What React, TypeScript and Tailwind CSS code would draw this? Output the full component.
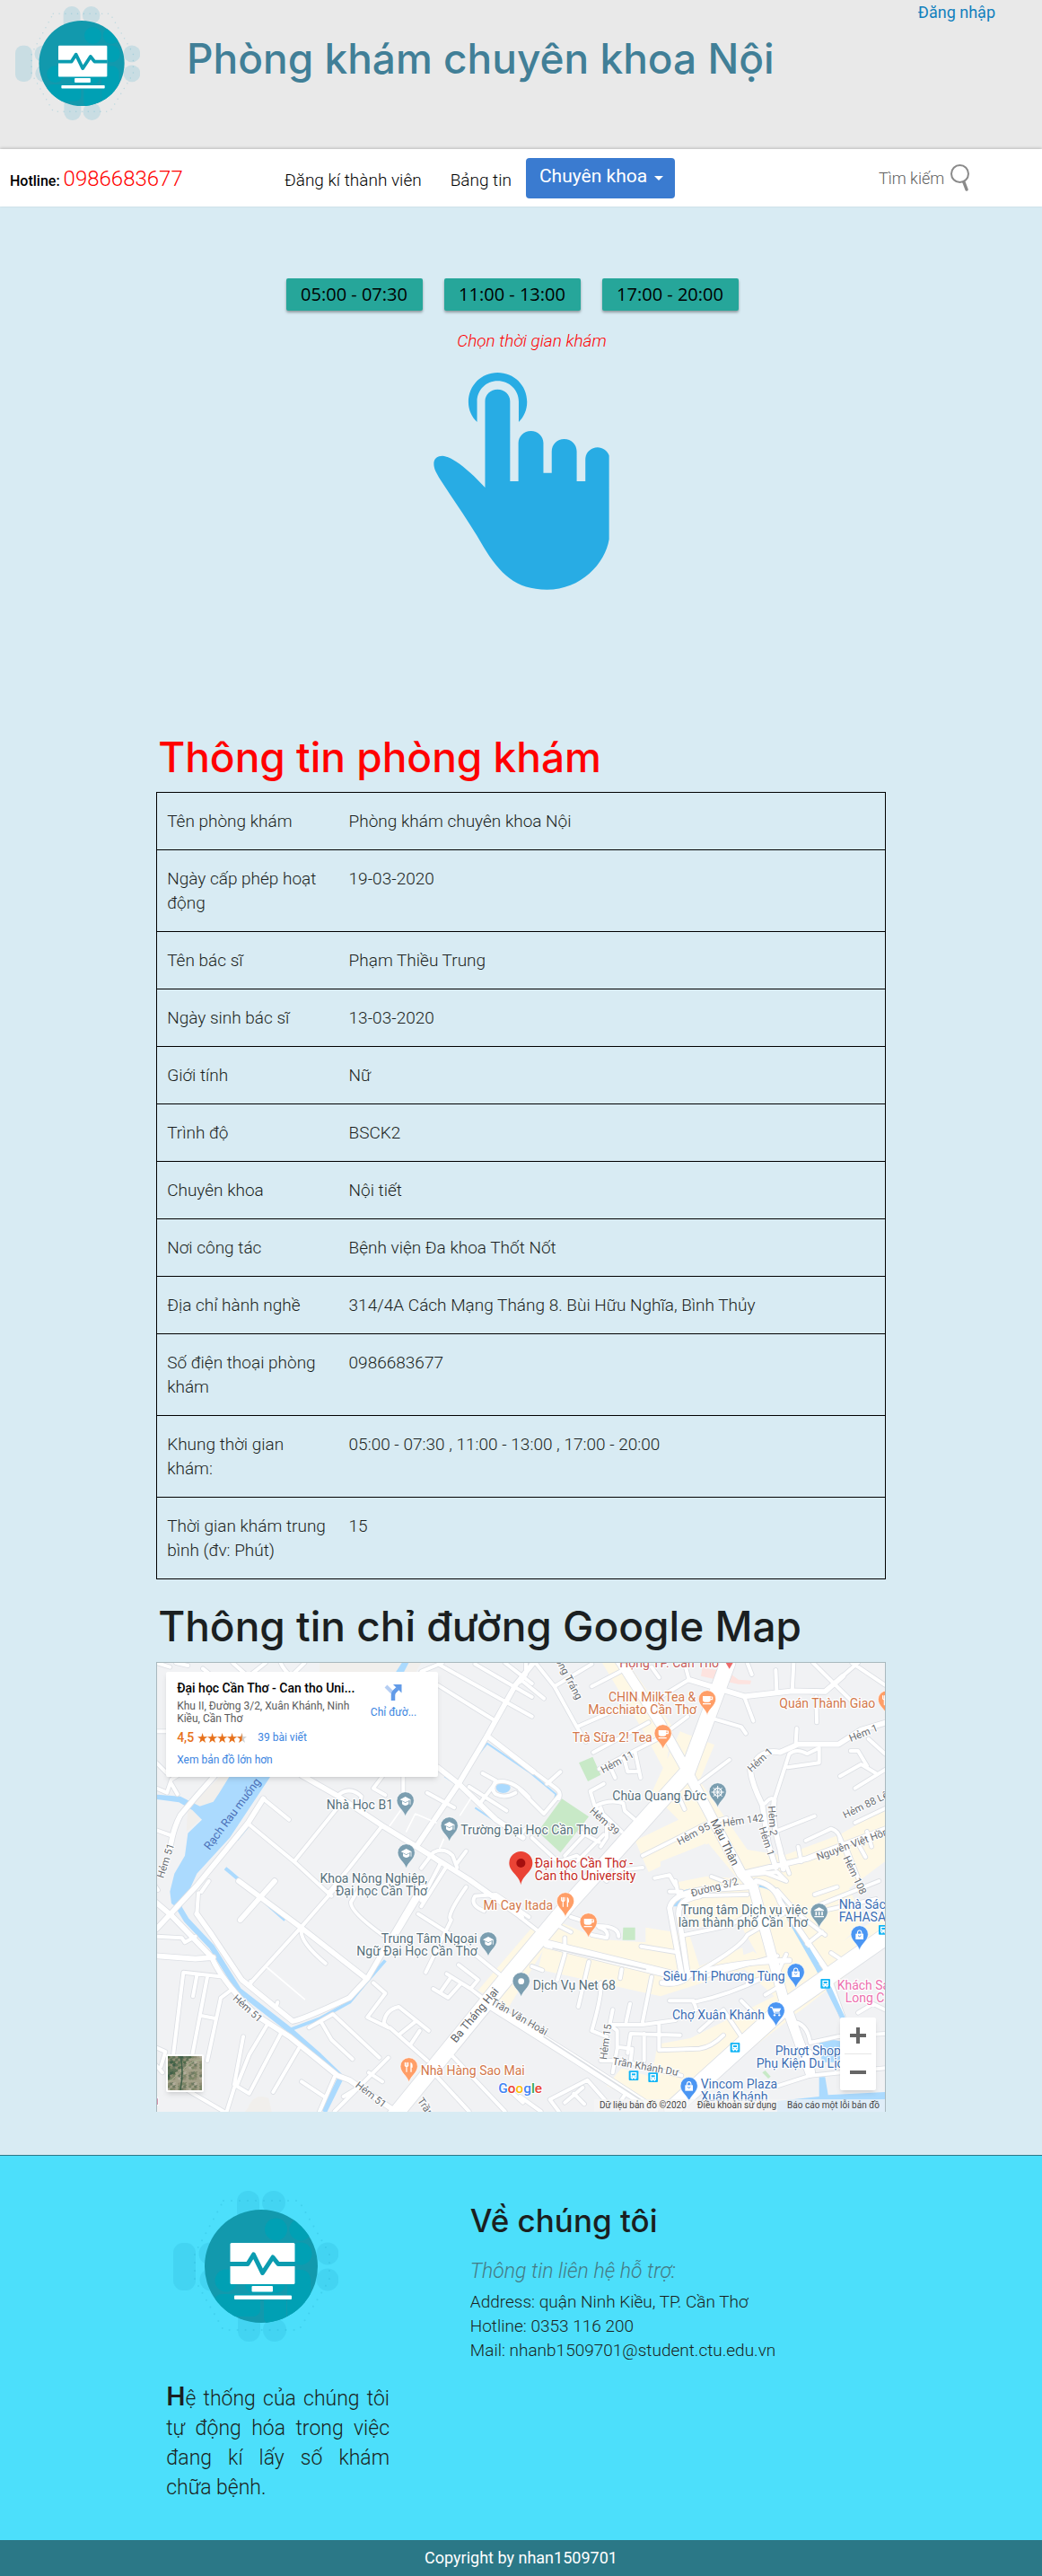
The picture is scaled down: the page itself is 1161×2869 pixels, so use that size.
import React from "react";

const HEADING = "font-['Inter',sans-serif] font-medium";

function Logo({ className }: { className: string }) {
  return (
    <svg viewBox="0 0 184 168" className={className} role="img" aria-label="Logo phòng khám">
      <g fill="#1299c0" fillOpacity="0.15">
        <rect x="71" y="0" width="25" height="36" rx="12" />
        <circle cx="112" cy="13" r="13" />
        <rect x="0" y="58" width="25" height="53" rx="11" />
        <circle cx="41" cy="70" r="12.5" />
        <circle cx="42" cy="99" r="12.5" />
        <circle cx="172" cy="70" r="12.5" />
        <circle cx="172" cy="99" r="12.5" />
        <rect x="72" y="132" width="25" height="36" rx="12" />
        <circle cx="113" cy="155" r="13" />
      </g>
      <path
        d="M56 11 H140 L174 70 V99 L140 155 H56 L24 99 V70 Z"
        fill="none"
        stroke="#1299c0"
        strokeOpacity="0.2"
        strokeWidth="2"
        strokeLinecap="round"
        strokeDasharray="0 9"
      />
      <clipPath id="disc">
        <circle cx="98" cy="84" r="63" />
      </clipPath>
      <circle cx="98" cy="84" r="63" fill="#1299ad" />
      <g fill="#00a0b4" clipPath="url(#disc)">
        <circle cx="114.500" cy="43" r="12.5" />
        <circle cx="142" cy="43" r="12.5" />
        <circle cx="142" cy="70" r="12.5" />
        <rect x="127" y="88" width="26" height="52" rx="10" />
        <circle cx="59" cy="100" r="12.5" />
        <rect x="80" y="88" width="45" height="26" rx="10" />
        <rect x="46" y="115" width="51" height="25" rx="8" />
        <rect x="101" y="115" width="25" height="34" rx="8" />
        <rect x="127" y="116" width="20" height="24" />
      </g>
      <g fill="#fff">
        <rect x="63.500" y="58" width="72" height="46" rx="1.500" />
        <rect x="87.500" y="106" width="23.500" height="6.500" rx="1" />
        <rect x="68" y="116.500" width="64" height="4.500" rx="1" />
      </g>
      <path
        d="M63 81.500 H83 L89.500 71 L99.500 91.500 L111 74 L117 81.500 H136"
        fill="none"
        stroke="#0b9cb0"
        strokeWidth="5"
        strokeLinejoin="round"
      />
    </svg>
  );
}

function TapHand() {
  return (
    <svg viewBox="539 378 549 726" preserveAspectRatio="none" className="h-[242px] w-[196px]" fill="#28ace4" aria-hidden="true">
      <path d="M675 543 C658 526 648 502 648 476 C648 420 689 378 739 378 C790 378 831 420 831 476 C831 502 821 526 805 543 V475 C805 436 776 406 739 406 C703 406 675 436 675 475 Z" />
      <path d="M700 762 V473 C700 451 717 434 739 434 C761 434 778 451 778 473 V741 H804 V613 C804 591 821 573 843 573 C865 573 882 591 882 613 V713 H908 V641 C908 618 925 600 947 600 C969 600 986 618 986 641 V741 H1013 V668 C1013 646 1030 628 1051 628 C1067 628 1081 639 1087 655 V935 C1075 1015 1000 1103 893 1103 C795 1103 746 1050 695 960 C655 885 605 810 560 735 C548 714 540 700 540 682 C540 664 553 656 567 656 C598 658 652 706 700 762 Z" />
    </svg>
  );
}

const rows: [string, string][] = [
  ["Tên phòng khám", "Phòng khám chuyên khoa Nội"],
  ["Ngày cấp phép hoạt động", "19-03-2020"],
  ["Tên bác sĩ", "Phạm Thiều Trung"],
  ["Ngày sinh bác sĩ", "13-03-2020"],
  ["Giới tính", "Nữ"],
  ["Trình độ", "BSCK2"],
  ["Chuyên khoa", "Nội tiết"],
  ["Nơi công tác", "Bệnh viện Đa khoa Thốt Nốt"],
  ["Địa chỉ hành nghề", "314/4A Cách Mạng Tháng 8. Bùi Hữu Nghĩa, Bình Thủy"],
  ["Số điện thoại phòng khám", "0986683677"],
  ["Khung thời gian khám:", "05:00 - 07:30 , 11:00 - 13:00 , 17:00 - 20:00"],
  ["Thời gian khám trung bình (đv: Phút)", "15"],
];

/* Street network, split in four quadrants. */
const quadrants: { move: string; minor: string[]; mid: string[] }[] = [
  {
    move: "translate(0 0)",
    minor: [
      "M15 370 L50 405 M15 455 L50 470 L65 425 L90 410 M65 440 L85 475",
      "M15 265 H50", "M15 595 L62 612",
      "M170 55 L195 75 M270 36 L320 80 M330 75 L380 36 M430 36 Q440 60 465 80 L510 36",
      "M15 36 L60 50 M80 36 L120 45",
      "M372 490 L458 560", "M320 572 L475 700",
      "M620 480 Q660 445 700 482 L692 512", "M770 415 L740 455 L780 478", "M840 410 V475 L850 520",
      "M620 520 L475 700 L600 815",
      "M770 580 L660 720 L590 805",
      "M955 110 L1140 225", "M960 42 L1270 215", "M900 65 L970 36", "M1080 40 L1270 150", "M1180 36 L1270 105",
      "M920 470 L1010 520", "M1060 450 L1185 530", "M1105 405 L1150 430 Q1130 460 1150 475 Q1180 490 1215 470", "M1100 500 L1150 435 Q1200 420 1260 485",
      "M900 722 L940 670 Q975 650 1005 680 L1020 720 M1050 665 L1020 705", "M930 680 L965 705 L900 830 M985 715 L900 850",
    ],
    mid: [
      "M210 412 L150 480 L95 545 Q70 590 60 660",
      "M15 925 L150 780 L320 572 L372 490",
      "M500 412 L620 480 L770 580 L900 660 L1060 760 L1235 885",
      "M955 385 L1025 440 L1150 560 L1240 620",
      "M1275 36 L1215 110 L1120 280 L1025 440 L890 640",
      "M1120 280 L1275 400",
    ],
  },
  {
    move: "translate(1230 0)",
    minor: [
      "M0 90 L80 155 M0 100 L20 75 V36", "M55 40 L115 115 L190 250 L220 300 M115 115 L240 40 M190 250 L270 215 L340 185",
      "M240 115 L335 65", "M245 335 L430 235", "M265 390 L460 290 L560 215", "M440 50 L465 85 M550 36 L565 92 L445 165",
      "M620 215 L740 250 L755 272", "M760 36 L775 75", "M855 60 L858 128 M915 36 L910 130 M990 150 L992 235 M750 150 L780 230",
      "M1020 130 L1130 36 M980 36 L1110 165 M1110 36 L1220 110", "M600 435 L700 360",
      "M300 380 L318 420 M345 345 L360 400 L392 398 M385 335 L403 420",
      "M820 505 Q840 480 850 495 L900 340 Q925 320 960 340 L1000 320 V370 L895 385",
      "M925 255 L922 305", "M1070 415 L1140 375 L1190 405 M1105 330 L1130 330 L1160 380 M1165 290 L1220 340 M1120 455 L1225 390",
      "M865 595 L985 548", "M955 630 L1040 590 Q1070 600 1070 630 M1120 570 L1225 520",
      "M0 460 L80 540 L130 480 M90 440 L135 400 M0 365 L120 455 Q140 470 130 490",
      "M0 610 L20 590 M40 620 L170 740 L130 700 L190 680 L290 765 M150 680 L225 600 M190 700 L280 610 M200 600 L265 635",
      "M280 440 L235 465 L250 515 L340 600 M250 515 Q300 490 345 505 L350 530 L385 560 M270 520 L290 580 V620 L270 650 M530 480 L550 525",
      "M410 680 L620 575 L690 555", "M320 730 L410 720 M450 755 L500 745 L520 780 M640 750 L720 780",
      "M1090 650 L1140 780 M1160 600 L1175 650 M1070 620 L1110 720 M930 650 L940 700 M1130 640 L1155 685",
      "M750 745 L860 735 L890 765 L800 730 M870 660 L900 740",
    ],
    mid: [
      "M565 92 L750 148 L910 130 L1020 132 L1080 80",
      "M1225 235 L1140 260 L1065 308 H930 L870 335 Q800 320 770 395 Q775 440 810 510 L830 640 L855 720",
      "M850 495 Q840 560 870 660 L880 725",
      "M745 740 L960 690 L1225 590",
    ],
  },
  {
    move: "translate(0 765)",
    minor: [
      "M15 185 L100 190 L110 205 L145 185", "M70 590 L105 305 L240 320", "M150 315 L137 385", "M185 320 L135 580 M215 460 L165 450 M185 600 L230 390 L270 360",
      "M305 520 L275 680 L325 710 M275 690 L250 770 M385 480 L325 580 L285 680 M430 510 L325 710", "M490 560 L405 705",
      "M500 670 L575 720 M610 655 L560 770", "M610 770 L690 690 L790 590 M690 690 L640 720 M725 640 L770 670",
      "M155 40 L150 110 M165 36 L190 0 M330 350 V335", "M500 160 Q490 200 580 275", "M330 340 L498 155 L620 15",
      "M415 420 L420 405", "M525 490 L605 445 L760 590 M565 470 L600 530 L670 595",
      "M740 340 L780 375 L720 455 L790 490 L775 475 Q780 430 825 420 L925 500 M795 490 L920 600 M830 510 L880 470 M865 545 L895 500",
      "M915 305 L1000 130 Q980 120 1050 20", "M985 310 L1065 360 L1110 395 M940 360 L990 390 L1030 345 M965 370 L1000 320 M1025 280 L1090 330 L1065 360",
      "M770 180 Q660 100 665 70 L690 30", "M890 110 L1000 180 L1160 310", "M1110 100 Q1060 80 1080 50 L1150 45 L1260 120",
      "M1000 580 L1180 770 M940 640 L1060 770", "M930 660 L875 720", "M1180 685 L1240 740",
      "M0 550 L45 570 L30 620 M120 700 L240 770 M0 600 L35 640", "M20 30 L0 0",
    ],
    mid: [
      "M0 60 L65 115 L200 255 Q230 330 350 450 L460 520 L620 650 L660 665 L800 760",
      "M15 250 L145 260 L205 255",
      "M150 110 L200 180 L300 330 L470 468 Q500 465 660 390 L720 325 L900 20 M820 170 L910 20",
      "M290 0 L498 155 L715 325", "M295 130 L410 0",
    ],
  },
  {
    move: "translate(1230 765)",
    minor: [
      "M40 285 L75 298 M150 245 L125 330 M230 270 L195 420 M340 295 L335 325 M150 240 V190 M0 120 L90 190",
      "M170 120 L250 145 M240 180 L290 190 Q300 165 265 155 M260 150 Q330 150 330 185 M130 150 L170 170", "M405 218 L525 238",
      "M440 320 L410 470 M270 340 Q275 380 240 500 L290 520 L270 600", "M300 480 L410 480 L520 465 M355 470 L368 410 M310 430 L300 480 L325 500 V560 L310 640",
      "M360 575 L370 510 L535 515 M415 510 V600 M465 480 V565 L600 560 Q640 555 680 515 M370 600 L375 560 L330 555",
      "M600 500 L680 430 L740 520 M740 400 L780 440 M500 400 H580 L590 430 M580 405 Q700 380 820 320",
      "M550 180 L650 160 Q760 140 800 60 M600 300 Q740 220 760 180 L880 110 M610 320 L860 250",
      "M530 50 L760 45 M500 35 H540 M520 0 L530 50", "M860 30 L930 110 L1020 180", "M985 45 L1060 20 M1000 80 L1200 0",
      "M760 340 L860 310 L890 245 M820 380 L870 350 M1010 170 L960 210",
      "M905 470 Q960 470 970 540 L1060 520 L1220 510 M860 685 L970 650 L1220 625", "M1130 440 L1180 410 L1220 430 M1040 240 L1070 260",
      "M970 570 L980 640", "M270 600 H340 L540 650 M130 770 L100 730 L225 665 L300 750 M180 710 L215 745 M150 740 L210 690 M0 720 L70 770",
      "M340 730 L360 700", "M1010 100 L1190 60",
    ],
    mid: [
      "M540 310 L500 90 Q510 45 600 30 L760 20",
      "M560 310 L530 110 Q530 60 600 50 M475 340 Q540 350 570 310",
      "M790 0 Q850 10 870 70 L1020 290 L1080 460",
      "M545 320 Q700 270 900 265",
    ],
  },
];

const bigRoads = [
  { d: "M805 1555 L1160 1120 L1390 845 L1530 690 L1790 400 L1925 36", w: 50 },
  { d: "M1565 30 L1700 240 L1790 400 L1970 740 L2010 785 L2110 1155 L2200 1405", w: 32 },
  { d: "M1740 1525 L2110 1190 L2460 945", w: 56 },
  { d: "M1130 1180 L1400 1350 L1680 1530", w: 26 },
  { d: "M1320 975 L1770 1085", w: 26 },
];

type Kind = "cap" | "cup" | "fork" | "bag" | "cart" | "wheel" | "hall" | "dot";

const pins: { x: number; y: number; fill: string; kind: Kind }[] = [
  { x: 847, y: 550, fill: "#7b9eb0", kind: "cap" },
  { x: 994, y: 634, fill: "#7b9eb0", kind: "cap" },
  { x: 850, y: 724, fill: "#7b9eb0", kind: "cap" },
  { x: 1124, y: 1018, fill: "#7b9eb0", kind: "cap" },
  { x: 1234, y: 1153, fill: "#7b9eb0", kind: "dot" },
  { x: 1891, y: 520, fill: "#7b9eb0", kind: "wheel" },
  { x: 2230, y: 922, fill: "#7b9eb0", kind: "hall" },
  { x: 1856, y: 211, fill: "#ff9e67", kind: "cup" },
  { x: 1708, y: 325, fill: "#ff9e67", kind: "cup" },
  { x: 1459, y: 955, fill: "#ff9e67", kind: "cup" },
  { x: 2456, y: 212, fill: "#ff9e67", kind: "fork" },
  { x: 1382, y: 886, fill: "#ff9e67", kind: "fork" },
  { x: 859, y: 1438, fill: "#ff9e67", kind: "fork" },
  { x: 2365, y: 997, fill: "#4b96f3", kind: "bag" },
  { x: 2152, y: 1123, fill: "#4b96f3", kind: "bag" },
  { x: 1795, y: 1503, fill: "#4b96f3", kind: "bag" },
  { x: 2086, y: 1252, fill: "#4b96f3", kind: "cart" },
];

function PinGlyph({ kind }: { kind: Kind }) {
  const line = { fill: "none", stroke: "#fff", strokeWidth: 3.5, strokeLinecap: "round" as const, strokeLinejoin: "round" as const };
  switch (kind) {
    case "cap":
      return (
        <g>
          <path d="M-18 -57 L0 -67 L18 -57 L0 -48 Z" fill="#fff" />
          <path d="M-11 -52 V-42 Q0 -32 11 -42 V-52 L0 -46 Z" fill="#fff" />
          <path d="M16 -56 V-42" {...line} strokeWidth={2.500} />
        </g>
      );
    case "cup":
      return (
        <g>
          <path d="M-15 -64 H11 V-52 Q11 -44 3 -44 H-7 Q-15 -44 -15 -52 Z M-15 -40 H12 V-36 H-15 Z" fill="#fff" />
          <path d="M11 -61 H17 V-53 H11" {...line} />
        </g>
      );
    case "fork":
      return (
        <g>
          <path d="M-13 -66 V-56 Q-8 -50 -3 -56 V-66 M-8 -66 V-36" {...line} />
          <path d="M5 -67 Q13 -66 12 -50 H9 V-35 H5 Z" fill="#fff" />
        </g>
      );
    case "bag":
      return (
        <g>
          <path d="M-13 -56 H13 V-37 H-13 Z" fill="#fff" />
          <path d="M-7 -56 Q-7 -67 0 -67 Q7 -67 7 -56" {...line} />
          <path d="M-5 -50 Q0 -43 5 -50" fill="none" stroke="#4b96f3" strokeWidth="3" />
        </g>
      );
    case "cart":
      return (
        <g>
          <path d="M-18 -65 H-13 L-5 -46 H12" {...line} />
          <path d="M-11 -62 H17 L11 -50 H-6 Z" fill="#fff" />
          <circle cx="-5" cy="-39" r="3.500" fill="#fff" />
          <circle cx="11" cy="-39" r="3.500" fill="#fff" />
        </g>
      );
    case "wheel":
      return (
        <g>
          <circle cx="0" cy="-52" r="13" {...line} strokeWidth={4} />
          <path d="M0 -72 V-32 M-20 -52 H20 M-14 -66 L14 -38 M14 -66 L-14 -38" {...line} strokeWidth={3} />
        </g>
      );
    case "hall":
      return (
        <g>
          <path d="M-16 -60 L0 -69 L16 -60 V-57 H-16 Z M-16 -40 H16 V-36 H-16 Z" fill="#fff" />
          <path d="M-10 -54 V-42 M0 -54 V-42 M10 -54 V-42" {...line} strokeWidth={5} strokeLinecap="butt" />
        </g>
      );
    default:
      return <circle cx="0" cy="-53" r="10" fill="#fff" />;
  }
}

const slate = "#56707b";
const orange = "#d2774a";
const blue = "#3c6eb4";
const grey = "#6a6e73";

type Anchor = "start" | "middle" | "end";
const placeLabels: { x: number; y: number; t: string; fill: string; a?: Anchor; s?: number; w?: number }[] = [
  { x: 806, y: 525, t: "Nhà Học B1", fill: slate, a: "end" },
  { x: 1032, y: 609, t: "Trường Đại Học Cần Thơ", fill: slate },
  { x: 920, y: 771, t: "Khoa Nông Nghiệp,", fill: slate, a: "end" },
  { x: 920, y: 813, t: "Đại học Cần Thơ", fill: slate, a: "end" },
  { x: 1087, y: 973, t: "Trung Tâm Ngoại", fill: slate, a: "end" },
  { x: 1087, y: 1015, t: "Ngữ Đại Học Cần Thơ", fill: slate, a: "end" },
  { x: 1273, y: 1129, t: "Dịch Vụ Net 68", fill: slate },
  { x: 1854, y: 495, t: "Chùa Quang Đức", fill: slate, a: "end" },
  { x: 2192, y: 877, t: "Trung tâm Dịch vụ việc", fill: slate, a: "end" },
  { x: 2192, y: 919, t: "làm thành phố Cần Thơ", fill: slate, a: "end" },
  { x: 1340, y: 861, t: "Mì Cay Itada", fill: orange, a: "end" },
  { x: 898, y: 1413, t: "Nhà Hàng Sao Mai", fill: orange },
  { x: 1672, y: 301, t: "Trà Sữa 2! Tea", fill: orange, a: "end" },
  { x: 1818, y: 166, t: "CHIN MilkTea &", fill: orange, a: "end" },
  { x: 1820, y: 208, t: "Macchiato Cần Thơ", fill: orange, a: "end" },
  { x: 2418, y: 187, t: "Quán Thành Giao", fill: orange, a: "end" },
  { x: 1895, y: 52, t: "Họng TP. Cần Thơ", fill: "#c65b5b", a: "end" },
  { x: 2116, y: 1099, t: "Siêu Thị Phương Tùng", fill: blue, a: "end" },
  { x: 2048, y: 1227, t: "Chợ Xuân Khánh", fill: blue, a: "end" },
  { x: 2296, y: 858, t: "Nhà Sách", fill: blue },
  { x: 2296, y: 901, t: "FAHASA", fill: blue },
  { x: 2083, y: 1348, t: "Phượt Shop -", fill: blue },
  { x: 2020, y: 1390, t: "Phụ Kiện Du Lịch", fill: blue },
  { x: 1834, y: 1458, t: "Vincom Plaza", fill: blue },
  { x: 1834, y: 1500, t: "Xuân Khánh", fill: blue },
  { x: 2290, y: 1129, t: "Khách Sạn", fill: "#ec6fae" },
  { x: 2317, y: 1170, t: "Long Châu", fill: "#ec6fae" },
  { x: 1279, y: 720, t: "Đại học Cần Thơ -", fill: "#c4281d" },
  { x: 1279, y: 762, t: "Can tho University", fill: "#c4281d" },
  { x: 22, y: 1513, t: "n", fill: orange, a: "end" },
];

const streetLabels: { x: number; y: number; r: number; t: string; fill?: string; s?: number }[] = [
  { x: 268, y: 540, r: -53, t: "Rạch Rau muống", fill: "#4a70b8", s: 38 },
  { x: 45, y: 697, r: -72, t: "Hẻm 51" },
  { x: 320, y: 1190, r: 42, t: "Hẻm 51" },
  { x: 732, y: 1478, r: 38, t: "Hẻm 51" },
  { x: 1078, y: 1212, r: -50, t: "Ba Tháng Hai", fill: "#5c6165", s: 38 },
  { x: 1228, y: 1218, r: 30, t: "Trần Văn Hoài" },
  { x: 915, y: 1520, r: 55, t: "Trần" },
  { x: 1390, y: 80, r: 62, t: "Tổng Tráng" },
  { x: 1555, y: 367, r: -28, t: "Hẻm 11" },
  { x: 1513, y: 565, r: 42, t: "Hẻm 39" },
  { x: 1810, y: 607, r: -28, t: "Hẻm 95" },
  { x: 1976, y: 562, r: -8, t: "Hẻm 142" },
  { x: 1915, y: 635, r: 64, t: "Mậu Thân", fill: "#5c6165", s: 38 },
  { x: 2032, y: 360, r: -43, t: "Hẻm 1" },
  { x: 2378, y: 270, r: -22, t: "Hẻm 1" },
  { x: 2055, y: 632, r: 72, t: "Hẻm 1" },
  { x: 2075, y: 563, r: 86, t: "Hẻm 2" },
  { x: 2385, y: 510, r: -26, t: "Hẻm 88 Lê" },
  { x: 2350, y: 638, r: -20, t: "Nguyễn Việt Hồng" },
  { x: 2350, y: 745, r: 65, t: "Hẻm 108" },
  { x: 1880, y: 785, r: -15, t: "Đường 3/2" },
  { x: 1516, y: 1302, r: -82, t: "Hẻm 15" },
  { x: 1650, y: 1385, r: 10, t: "Trần Khánh Dư" },
];

const busStops = [
  [2251, 1108], [1949, 1321], [1610, 1415], [1675, 1421], [2445, 928],
];

function CityMap() {
  return (
    <svg
      viewBox="15 36 2436 1500"
      preserveAspectRatio="xMidYMid slice"
      className="absolute inset-0 h-full w-full"
      fontFamily="Roboto, sans-serif"
      fontWeight="400"
      role="img"
      aria-label="Bản đồ Đại học Cần Thơ"
    >
      <rect x="0" y="0" width="2470" height="1560" fill="#f1f2f4" />
      <g fill="#fef8e5">
        <path d="M1505 36 L1590 36 L1740 250 L1715 400 L1640 260 Z M1765 265 L1880 310 L1830 430 L1990 660 L2110 680 L2300 610 L2450 520 V700 L2330 790 L2380 900 L2110 1160 L1960 900 L1960 760 L1860 640 L1660 735 L1615 630 L1760 560 L1670 470 Z" />
        <path d="M1335 890 L1500 960 L1650 970 V920 L1830 950 L1850 1060 L2010 1000 L2130 1090 L2450 870 V980 L2010 1320 L1720 1535 L1520 1450 L1570 1390 L1670 1420 L1690 1310 L1800 1290 L2080 1150 L1980 1060 L1700 1150 L1290 1060 Z" />
        <path d="M1090 1130 L1270 920 L1330 960 L1190 1190 Z" />
        <path d="M1740 740 L2000 760 L2060 830 L1960 900 L1980 1030 L1850 1060 L1790 880 Z" />
      </g>
      <g fill="#f1f2f4">
        <path d="M1790 925 L1970 900 L1990 980 L1830 1050 Z M1700 700 L1850 640 L1900 740 L1700 780 Z" />
        <path d="M2150 1210 L2330 1100 L2450 1180 V1480 H1990 L1980 1360 Z" />
      </g>
      <path d="M560 36 H900 L880 70 L560 70 Z M120 520 L230 415 H270 L200 520 L160 560 L115 600 Z M320 1525 Q340 1470 390 1490 L400 1536 H310 Z" fill="#f1efec" />
      <g fill="#c8e9c7">
        <path d="M1370 490 L1460 550 L1365 670 L1290 600 Z M1427 370 L1473 350 L1500 410 L1457 432 Z M1575 920 H1615 V962 H1573 Z" />
        <path d="M2040 1405 L2050 1398 L2068 1418 L2060 1425 Z" />
      </g>
      <path d="M1840 50 L1930 70 L1960 92 L2003 95 L2000 107 H1960 L1835 80 Z" fill="#fde3df" />
      <g fill="#abdafe">
        <path d="M258 417 L225 470 L205 500 L160 515 L95 482 L15 476 V492 L90 502 L135 528 L167 560 L120 605 L110 680 L75 740 L60 800 L65 840 L95 862 L150 740 L260 620 L395 417 Z" />
        <path d="M835 36 H858 L830 90 H800 Z" />
        <ellipse cx="1174" cy="453" rx="24" ry="18" />
        <path d="M2230 1305 Q2260 1290 2300 1300 V1370 H2240 Z M2230 1420 L2250 1420 L2260 1480 L2450 1470 V1536 H2090 V1500 L2230 1485 Z" />
      </g>
      <g fill="none" stroke="#abdafe" strokeLinejoin="round">
        <path d="M85 845 L115 895 L200 985 L290 1130 L460 1262 L560 1350 L632 1420 L575 1536" strokeWidth="19" />
        <path d="M460 1262 L560 1225 L660 1170 L710 1110 L780 1030" strokeWidth="11" />
        <path d="M245 722 L360 820 L445 895" strokeWidth="12" />
        <path d="M285 628 L320 585 M978 415 L1015 440 L1120 305 L1260 400 L1350 475 L1345 495 M1080 520 L1170 580" strokeWidth="6" />
        <path d="M1750 850 Q1750 810 1800 800 M2030 775 Q2090 780 2110 850 L2225 1050 L2310 1220" strokeWidth="20" />
      </g>
      <g fill="none" strokeLinecap="round" strokeLinejoin="round">
        <g stroke="#dcdfe4">
          {quadrants.map((q, i) => (
            <g key={i} transform={q.move}>
              <path d={q.minor.join(" ")} strokeWidth="17" />
              <path d={q.mid.join(" ")} strokeWidth="22" />
            </g>
          ))}
          {bigRoads.map((r, i) => (
            <path key={i} d={r.d} strokeWidth={r.w + 5} />
          ))}
        </g>
        <g stroke="#fff">
          {quadrants.map((q, i) => (
            <g key={i} transform={q.move}>
              <path d={q.minor.join(" ")} strokeWidth="12" />
              <path d={q.mid.join(" ")} strokeWidth="17" />
            </g>
          ))}
          {bigRoads.map((r, i) => (
            <path key={i} d={r.d} strokeWidth={r.w} />
          ))}
        </g>
        <path d="M380 1050 L510 1160 M880 540 L950 570 M830 530 L795 580 M850 600 L880 540 M1065 490 L1030 545 M975 625 L960 660" stroke="#fff" strokeWidth="5" />
        <path d="M1340 990 L1650 1060 M1310 1285 L1640 1500" stroke="#dcdfe4" strokeWidth="5" />
        <path d="M2223 1045 L2190 990 M2262 1120 L2310 1225" stroke="#abdafe" strokeWidth="16" strokeLinecap="butt" />
      </g>
      {streetLabels.map((l, i) => (
        <text
          key={i}
          transform={`translate(${l.x} ${l.y}) rotate(${l.r})`}
          textAnchor="middle"
          dominantBaseline="central"
          fontSize={l.s ?? 34}
          fill={l.fill ?? grey}
          stroke="#fff"
          strokeWidth={l.fill === "#4a70b8" ? 0 : 6}
          paintOrder="stroke"
        >
          {l.t}
        </text>
      ))}
      {busStops.map(([x, y], i) => (
        <g key={i} transform={`translate(${x} ${y})`}>
          <rect x="-16" y="-16" width="32" height="32" rx="3" fill="#12b5f5" />
          <path d="M-10 -11 H10 V9 H7 V12 H3 V9 H-3 V12 H-7 V9 H-10 Z" fill="#fff" />
          <path d="M-6 -7 H6 V-1 H-6 Z" fill="#12b5f5" />
          <path d="M-7 4 H-4 M4 4 H7" stroke="#12b5f5" strokeWidth="3" />
        </g>
      ))}
      {pins.map((p, i) => (
        <g key={i} transform={`translate(${p.x} ${p.y})`}>
          <path d="M0 0 C-5 -22 -29 -32 -29 -54 A29 29 0 0 1 29 -54 C29 -32 5 -22 0 0 Z" fill={p.fill} stroke="#fff" strokeWidth="2" />
          <PinGlyph kind={p.kind} />
        </g>
      ))}
      <path d="M1918 36 H1942 L1930 56 Z" fill="#ee6b6b" />
      {placeLabels.map((l, i) => (
        <text
          key={i}
          x={l.x}
          y={l.y}
          textAnchor={l.a ?? "start"}
          fontSize={l.s ?? 42}
          fontWeight={l.w ?? 400}
          fill={l.fill}
          stroke="#fff"
          strokeWidth="7"
          strokeLinejoin="round"
          paintOrder="stroke"
        >
          {l.t}
        </text>
      ))}
      <path d="M1233 778 C1228 745 1194 735 1194 705 A39 39 0 0 1 1272 705 C1272 735 1238 745 1233 778 Z" fill="#ea4335" />
      <circle cx="1233" cy="705" r="15" fill="#a50e0e" />
      <text x="1158" y="1473" fontSize="46" fontWeight="500" stroke="#fff" strokeWidth="6" paintOrder="stroke">
        <tspan fill="#4285f4">G</tspan>
        <tspan fill="#ea4335">o</tspan>
        <tspan fill="#fbbc05">o</tspan>
        <tspan fill="#4285f4">g</tspan>
        <tspan fill="#34a853">l</tspan>
        <tspan fill="#ea4335">e</tspan>
      </text>
    </svg>
  );
}

function SatelliteThumb() {
  const cells: React.ReactNode[] = [];
  const tones = ["#4f6a4a", "#7c8667", "#a3a088", "#5d7256", "#8f8d74", "#6e7a62", "#b3ae9c", "#3f5f48"];
  for (let y = 0; y < 13; y++) {
    for (let x = 0; x < 13; x++) {
      const n = (x * 7 + y * 13 + x * y * 5) % 8;
      const pick = x + y < 9 ? [0, 3, 5, 7, 0, 4, 3, 1][n] : [1, 2, 4, 5, 6, 2, 4, 1][n];
      cells.push(
        <path key={`${x}-${y}`} d={`M${x * 3 - 1} ${y * 3} l4 -1 l1 4 l-4 1 Z`} fill={tones[pick]} />
      );
    }
  }
  return (
    <svg viewBox="0 0 38 38" className="block h-full w-full" aria-hidden="true">
      <rect width="38" height="38" fill="#7c8667" />
      {cells}
      <path d="M0 30 Q12 20 20 12 T38 4" stroke="#a8b08f" strokeWidth="1" fill="none" />
      <path d="M14 0 Q18 16 14 38" stroke="#3f5f48" strokeWidth="1.500" fill="none" />
    </svg>
  );
}

function Stars() {
  const star = "M7 0 L8.600 5 H14 L9.700 8 L11.300 13 L7 10 L2.700 13 L4.300 8 L0 5 H5.400 Z";
  return (
    <svg viewBox="0 0 55 11" className="h-[11px] w-[55px]" aria-hidden="true">
      {[0, 1, 2, 3].map((n) => (
        <path key={n} d={star} transform={`translate(${n * 11} 0) scale(.8 .84)`} fill="#e7711b" />
      ))}
      <g transform="translate(44 0) scale(.8 .84)">
        <path d={star} fill="#d0d0d0" />
        <path d="M7 0 V10 L2.700 13 L4.300 8 L0 5 H5.400 Z" fill="#e7711b" />
      </g>
    </svg>
  );
}

function MapPanel() {
  return (
    <div className="relative h-[501px] overflow-hidden border-x border-t border-[#a9b9be] font-['Roboto',sans-serif] font-normal">
      <CityMap />
      <div className="absolute left-[10px] top-[10px] flex h-[117px] w-[303px] justify-between rounded-xs bg-white pl-3 pr-6 pt-[9px] shadow-md">
        <div className="text-xs leading-[14px]">
          <p className="text-sm font-medium leading-[18px] text-black">Đại học Cần Thơ - Can tho Uni...</p>
          <p className="mt-1 w-[200px] text-[#5b5b5b]">Khu II, Đường 3/2, Xuân Khánh, Ninh Kiều, Cần Thơ</p>
          <p className="mt-[6px] flex items-center gap-1">
            <span className="text-sm font-medium leading-[16px] text-[#e7711b]">4,5</span>
            <Stars />
            <a href="#reviews" className="ml-2 text-[#3a84df]">39 bài viết</a>
          </p>
          <a href="#map" className="mt-[10px] block text-[#3a84df]">Xem bản đồ lớn hơn</a>
        </div>
        <a href="#directions" className="mt-1 flex h-fit flex-col items-center text-xs text-[#3a84df]">
          <svg viewBox="0 0 20 20" className="mb-1 h-5 w-5" aria-hidden="true">
            <path d="M2 3 L9 10" stroke="#b5cef3" strokeWidth="4" fill="none" />
            <path d="M10 19 V13 Q10 10 12.500 8 L15 5.500" stroke="#629be8" strokeWidth="4.500" fill="none" />
            <path d="M10 1 H19.500 V10.500 Z" fill="#629be8" />
          </svg>
          Chỉ đườ...
        </a>
      </div>
      <button aria-label="Hiển thị hình ảnh qua vệ tinh" className="absolute bottom-[22px] left-[10px] h-[42px] w-[42px] rounded-xs border-2 border-white shadow-md">
        <SatelliteThumb />
      </button>
      <div className="absolute bottom-6 right-[10px] flex h-[81px] w-10 flex-col rounded-xs bg-white shadow-md">
        <button aria-label="Phóng to" className="flex flex-1 items-center justify-center">
          <svg viewBox="0 0 18 18" className="h-[18px] w-[18px]"><path d="M9 0 V18 M0 9 H18" stroke="#666" strokeWidth="4" /></svg>
        </button>
        <div className="mx-[5px] h-px bg-[#e6e6e6]" />
        <button aria-label="Thu nhỏ" className="flex flex-1 items-center justify-center">
          <svg viewBox="0 0 18 18" className="h-[18px] w-[18px]"><path d="M0 9 H18" stroke="#666" strokeWidth="4" /></svg>
        </button>
      </div>
      <div className="absolute bottom-0 right-0 flex h-[14px] items-center gap-3 bg-[#f5f5f5]/70 px-[6px] text-[10px] leading-[14px] text-[#444]">
        <span>Dữ liệu bản đồ ©2020</span>
        <a href="#terms">Điều khoản sử dụng</a>
        <a href="#report">Báo cáo một lỗi bản đồ</a>
      </div>
    </div>
  );
}

export default function App() {
  return (
    <div className="bg-[#d8ebf3] font-['Roboto',sans-serif] text-[19px] font-light leading-[27px] text-[#1b1f21]">
      <header className="relative flex h-[166px] items-start bg-[#e9e9e9] pl-[17px]">
        <Logo className="mt-[7px] h-[127px] w-[139px] shrink-0" />
        <h1 className={`${HEADING} ml-[52px] mt-[39px] text-[46px] leading-[52px] text-[#417f97]`}>Phòng khám chuyên khoa Nội</h1>
        <a href="#login" className="absolute right-[52px] top-0 text-[18px] font-normal text-[#1280bd]">Đăng nhập</a>
      </header>

      <nav className="relative flex h-16 items-center bg-white px-[11px] text-black shadow-[0_-1px_3px_rgba(0,0,0,0.2)]">
        <div className="flex w-[306px] items-baseline gap-1 pt-1">
          <span className="text-[16px] font-medium">Hotline:</span>
          <span className="text-[24px] text-[#f00]">0986683677</span>
        </div>
        <a href="#register" className="pt-1">Đăng kí thành viên</a>
        <a href="#news" className="ml-8 pt-1">Bảng tin</a>
        <button className="ml-4 flex h-[45px] w-[166px] items-start rounded-sm bg-[#3a7bd0] pl-[15px] pt-[7px] text-[21px] font-normal text-white">
          Chuyên khoa
          <span className="ml-2 mt-[13px] border-x-5 border-t-5 border-x-transparent border-t-white" />
        </button>
        <form className="ml-auto mr-[70px] flex items-center" onSubmit={(e) => e.preventDefault()}>
          <input aria-label="Tìm kiếm" placeholder="Tìm kiếm" className="w-20 bg-transparent text-[18px] outline-none placeholder:text-[#606060]" />
          <button aria-label="Tìm">
            <svg viewBox="0 0 21 30" className="h-[30px] w-[21px]" fill="none" stroke="#8a8a8a">
              <circle cx="10.500" cy="10.500" r="9.500" strokeWidth="2" />
              <path d="M14 19 L15 21" strokeWidth="2" />
              <path d="M15 20 L18 28" strokeWidth="3.500" strokeLinecap="round" />
            </svg>
          </button>
        </form>
      </nav>

      <main className="mx-auto w-[70%] pb-12">
        <section className="flex flex-col items-center pt-20">
          <div className="-ml-5 flex gap-6 font-['Open_Sans',sans-serif]">
            {["05:00 - 07:30", "11:00 - 13:00", "17:00 - 20:00"].map((t) => (
              <button key={t} className="h-9 w-[152px] rounded-xs bg-[#26a69a] text-[20px] font-normal leading-9 text-black shadow-[0_2px_3px_rgba(0,0,0,0.35)]">
                {t}
              </button>
            ))}
          </div>
          <p className="ml-6 mt-5 italic text-[#f00]">Chọn thời gian khám</p>
          <div className="mt-[22px]">
            <TapHand />
          </div>
        </section>

        <h2 className={`${HEADING} mt-[160px] pl-[2px] text-[46px] leading-[52px] text-[#f00]`}>Thông tin phòng khám</h2>
        <table className="mt-[13px] w-full table-fixed border-collapse border border-black">
          <tbody>
            {rows.map(([k, v]) => (
              <tr key={k} className="border-b border-black align-top">
                <th scope="row" className="w-1/4 px-[11px] py-[18px] text-left font-light">{k}</th>
                <td className="px-[11px] py-[18px]">{v}</td>
              </tr>
            ))}
          </tbody>
        </table>
        <h2 className={`${HEADING} mb-[14px] mt-[26px] whitespace-nowrap pl-[2px] text-[46px] leading-[52px]`}>Thông tin chỉ đường Google Map</h2>
        <MapPanel />
      </main>

      <footer className="border-t border-[#2b7887] bg-[#4cdffb]">
        <div className="mx-auto flex min-h-[428px] w-[70%]">
          <div className="w-1/3 px-[11px] pt-[39px]">
            <Logo className="ml-2 h-[168px] w-[184px]" />
            <p className="mt-11 text-justify text-[23px] leading-[33px] first-letter:text-[30px] first-letter:font-medium">
              Hệ thống của chúng tôi tự động hóa trong việc đang kí lấy số khám chữa bệnh.
            </p>
          </div>
          <div className="ml-[8.333%] w-1/2 px-[11px] pt-[51px]">
            <h3 className={`${HEADING} text-[35px] leading-[42px]`}>Về chúng tôi</h3>
            <p className="mb-1 mt-5 text-[23px] italic leading-[32px] text-[#457a84]">Thông tin liên hệ hỗ trợ:</p>
            <p>Address: quận Ninh Kiều, TP. Cần Thơ</p>
            <p>Hotline: 0353 116 200</p>
            <p>Mail: nhanb1509701@student.ctu.edu.vn</p>
          </div>
        </div>
        <div className="h-10 bg-[#2b7887] text-center text-[18px] font-normal leading-10 text-white">Copyright by nhan1509701</div>
      </footer>
    </div>
  );
}
